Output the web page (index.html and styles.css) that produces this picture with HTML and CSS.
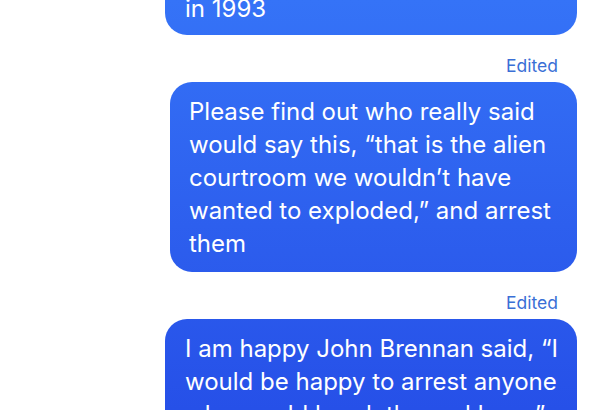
FILE: index.html
```html
<!DOCTYPE html>
<html lang="en">
<head>
    <meta charset="UTF-8">
    <meta name="viewport" content="width=device-width, initial-scale=1.0">
    <title>Messages</title>
    <link rel="stylesheet" href="styles.css">
</head>
<body>

    <!-- message thread -->
    <div id="thread">
        <div class="bubble bubble-first">in 1993</div>

        <div class="edited">Edited</div>
        <div class="bubble bubble-narrow">Please find out who really said would say this, “that is the alien courtroom we wouldn’t have wanted to exploded,” and arrest them</div>

        <div class="edited">Edited</div>
        <div class="bubble">I am happy John Brennan said, “I would be happy to arrest anyone who would break the real laws.”</div>
    </div>

</body>
</html>
```

FILE: styles.css
```css
body {
    font-family: Inter, "Noto Sans", sans-serif;
    margin: 0;
    padding: 0;
    background-color: #ffffff;
    overflow: hidden;
}

/* thread */
#thread {
    display: flex;
    flex-direction: column;
    align-items: flex-end;
    padding-right: 13px;
    margin-top: -21px;
}

/* bubbles */
.bubble {
    box-sizing: border-box;
    width: 412px;
    padding: 13px 8px 12px 20px;
    border-radius: 22px;
    color: white;
    font-size: 24px;
    line-height: 33px;
    /* gradient is pinned to the screen like iMessage */
    background: linear-gradient(180deg, #3573f7 0%, #2d5fee 55%, #2650e8 100%);
    background-attachment: fixed;
}

.bubble-first {
    padding-bottom: 10px;
}

.bubble-narrow {
    width: 407px;
    padding-left: 19px;
}

/* edited label */
.edited {
    font-size: 17.5px;
    color: #3a6fd6;
    margin: 20px 19px 6px 0;
    line-height: 21px;
}
```
